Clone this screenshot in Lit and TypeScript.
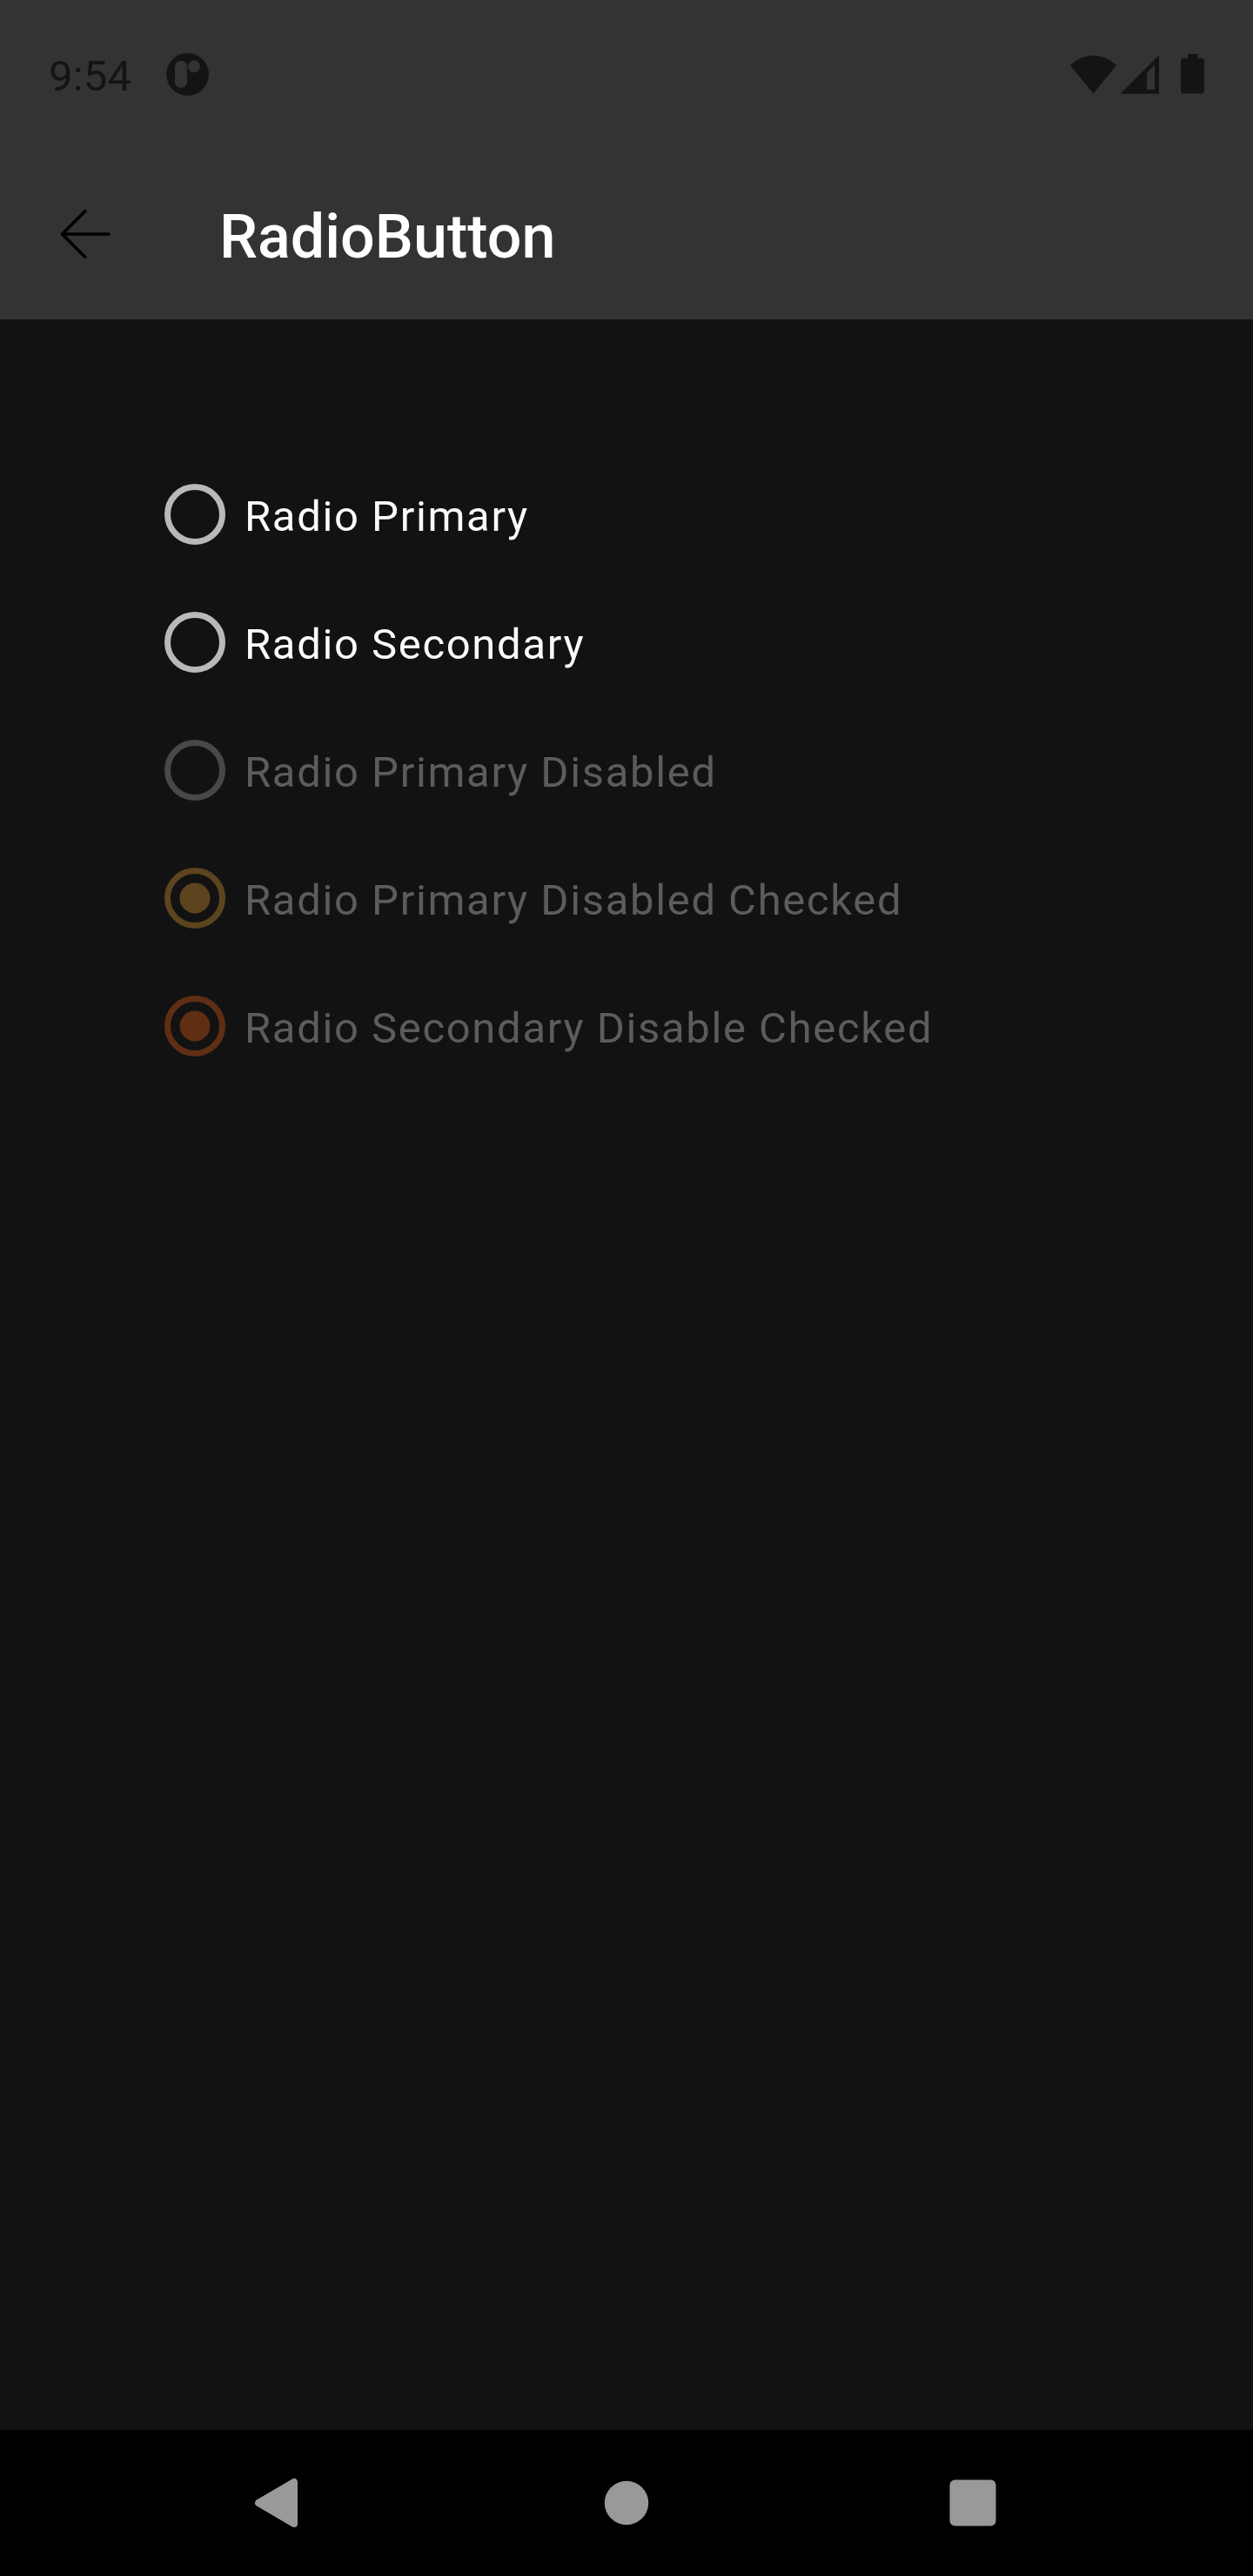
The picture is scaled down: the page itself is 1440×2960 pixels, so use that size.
import { LitElement, html, css, svg, nothing } from "lit";
import { customElement, property } from "lit/decorators.js";
import { classMap } from "lit/directives/class-map.js";

interface RadioOption {
  label: string;
  tone: "primary" | "secondary";
  checked: boolean;
  disabled: boolean;
}

const OPTIONS: RadioOption[] = [
  { label: "Radio Primary", tone: "primary", checked: false, disabled: false },
  { label: "Radio Secondary", tone: "secondary", checked: false, disabled: false },
  { label: "Radio Primary Disabled", tone: "primary", checked: false, disabled: true },
  { label: "Radio Primary Disabled Checked", tone: "primary", checked: true, disabled: true },
  { label: "Radio Secondary Disable Checked", tone: "secondary", checked: true, disabled: true },
];

@customElement("radio-row")
export class RadioRow extends LitElement {
  @property({ attribute: false }) option!: RadioOption;

  static styles = css`
    :host {
      display: block;
      height: 147px;
    }
    .row {
      display: flex;
      align-items: center;
      height: 148px;
      color: #b9b9b9;
    }
    .mark {
      display: block;
      flex: none;
      width: 70px;
      height: 70px;
    }
    .label {
      padding: 5px 0 0 22px;
      font-size: 49px;
      line-height: 58px;
      letter-spacing: 1.66px;
      word-spacing: -0.4px;
      white-space: nowrap;
      color: #fafafa;
    }
    .disabled {
      color: #484848;
    }
    .disabled .label {
      color: #5c5c5c;
    }
    .disabled.checked.primary {
      color: #5c441e;
    }
    .disabled.checked.secondary {
      color: #5f2e13;
    }
  `;

  render() {
    const { label, tone, checked, disabled } = this.option;
    return html`
      <div
        class=${classMap({ row: true, [tone]: true, checked, disabled })}
        role="radio"
        aria-checked=${checked ? "true" : "false"}
        aria-disabled=${disabled ? "true" : "false"}
      >
        <svg class="mark" viewBox="0 0 70 70">
          <circle cx="35" cy="35" r="31.5" fill="none" stroke="currentColor" stroke-width="7" />
          ${checked ? svg`<circle cx="35" cy="35" r="17.5" fill="currentColor" />` : nothing}
        </svg>
        <span class="label">${label}</span>
      </div>
    `;
  }
}

@customElement("app-root")
export class AppRoot extends LitElement {
  static styles = css`
    :host {
      display: block;
      font-family: Roboto, "Liberation Sans", sans-serif;
    }
    .screen {
      display: flex;
      flex-direction: column;
      width: 1440px;
      height: 2960px;
      background: #121212;
      overflow: hidden;
    }
    svg {
      display: block;
      flex: none;
    }
    .status {
      display: flex;
      align-items: center;
      justify-content: space-between;
      box-sizing: border-box;
      height: 171px;
      padding: 0 52px 0 56px;
      background: #333333;
      color: #141414;
    }
    .side {
      display: flex;
      align-items: center;
    }
    .time {
      width: 134px;
      padding-top: 4px;
      font-size: 49px;
      line-height: 58px;
      letter-spacing: 0.2px;
    }
    .toolbar {
      display: flex;
      align-items: center;
      box-sizing: border-box;
      height: 196px;
      padding-left: 64px;
      background: #333333;
    }
    .title {
      margin: 0;
      padding: 6px 0 0 118px;
      font-size: 70px;
      line-height: 82px;
      font-weight: 500;
      color: #ffffff;
      white-space: nowrap;
    }
    .content {
      flex: 1;
      padding: 150px 0 0 189px;
    }
    .nav {
      display: flex;
      align-items: center;
      justify-content: space-between;
      box-sizing: border-box;
      height: 168px;
      padding: 0 288px;
      background: #000000;
      color: #999999;
    }
  `;

  render() {
    return html`
      <div class="screen">
        <div class="status">
          <div class="side">
            <span class="time">9:54</span>
            <svg width="52" height="171" viewBox="190 0 52 171" fill="currentColor">
              <circle cx="215.6" cy="85.4" r="24.4" />
              <rect x="201" y="69.7" width="14" height="31.3" rx="7" fill="#333333" />
              <circle cx="223" cy="76.4" r="7" fill="#333333" />
            </svg>
          </div>
          <svg width="168" height="171" viewBox="1220 0 168 171" fill="currentColor">
            <path d="M1256.5 107.5 L1230 75 A37 37 0 0 1 1283 75 Z" />
            <path fill-rule="evenodd" d="M1287.5 107.8 L1332 63.3 V107.8 Z M1318 83.5 V103 H1327 V74.5 Z" />
            <path d="M1365 62 H1376.5 V67 H1381 Q1384 67 1384 70 V104.5 Q1384 107.5 1381 107.5 H1360 Q1357 107.5 1357 104.5 V70 Q1357 67 1360 67 H1365 Z" />
          </svg>
        </div>
        <div class="toolbar">
          <svg width="70" height="70" viewBox="0 0 70 70" fill="none" stroke="#000000" stroke-width="3.6" stroke-linecap="round" stroke-linejoin="round">
            <path d="M61 35 H7.5 M33.7 8.7 L7.5 35 L33.7 61.3" />
          </svg>
          <h1 class="title">RadioButton</h1>
        </div>
        <div class="content" role="radiogroup">
          ${OPTIONS.map((option) => html`<radio-row .option=${option}></radio-row>`)}
        </div>
        <div class="nav">
          <svg width="60" height="60" viewBox="0 0 60 60" fill="currentColor" stroke="currentColor" stroke-width="8" stroke-linejoin="round">
            <path d="M50 6 V54 L9 30 Z" />
          </svg>
          <svg width="60" height="60" viewBox="0 0 60 60" fill="currentColor">
            <circle cx="30" cy="30" r="25.2" />
          </svg>
          <svg width="60" height="60" viewBox="0 0 60 60" fill="currentColor" overflow="visible">
            <rect x="-0.5" y="3.5" width="53" height="53" rx="6" />
          </svg>
        </div>
      </div>
    `;
  }
}
